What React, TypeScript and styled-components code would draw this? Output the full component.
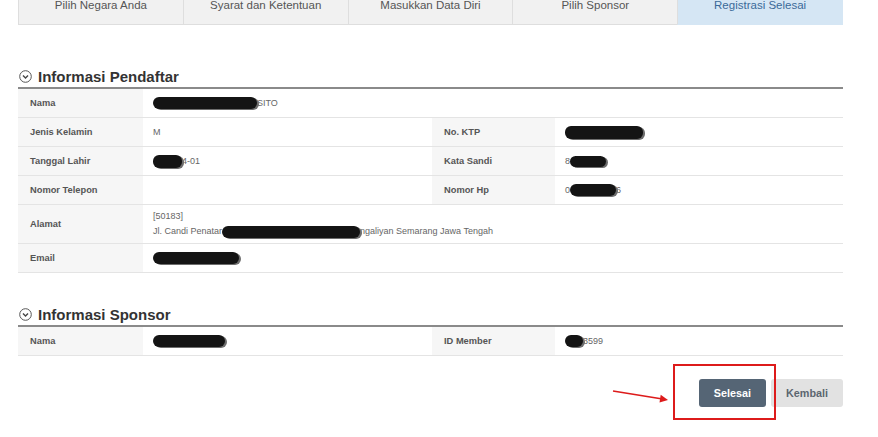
import styled, { createGlobalStyle } from "styled-components";

const GlobalStyle = createGlobalStyle`
  html, body {
    margin: 0;
    background: #fff;
  }
  body {
    font-family: "Liberation Sans", Arial, sans-serif;
  }
`;

const Page = styled.div`
  width: 825px;
  margin-left: 18px;
  padding-bottom: 30px;
`;

const Tabs = styled.ul`
  display: flex;
  margin: -15px 0 0;
  padding: 0;
  list-style: none;
`;

const Tab = styled.li<{ $active?: boolean }>`
  flex: 1;
  height: 40px;
  box-sizing: border-box;
  display: flex;
  align-items: center;
  justify-content: center;
  font-size: 11.5px;
  background: ${(p) => (p.$active ? "#d5e6f4" : "#f1f1f1")};
  color: ${(p) => (p.$active ? "#3b6a99" : "#555")};
  border: 1px solid ${(p) => (p.$active ? "#d5e6f4" : "#dedede")};
  border-left-color: #dedede;
  border-right-width: 0;
  &:last-child {
    border-right-width: 1px;
  }
`;

const Section = styled.section<{ $gap: number }>`
  margin-top: ${(p) => p.$gap}px;
`;

const Title = styled.h2`
  display: flex;
  align-items: center;
  gap: 6px;
  height: 20px;
  margin: 0 0 1px;
  padding-left: 1px;
  font-size: 15px;
  font-weight: bold;
  color: #333;
`;

const Table = styled.div`
  display: grid;
  grid-template-columns: 125px 289px 123px 288px;
  border-top: 2px solid #8a8a8a;
`;

const Cell = styled.div`
  box-sizing: border-box;
  min-height: 29px;
  display: flex;
  flex-direction: column;
  justify-content: center;
  align-items: flex-start;
  padding: 4px 12px;
  line-height: 15px;
  border-bottom: 1px solid #e4e4e4;
`;

const Label = styled(Cell)`
  background: #f6f6f6;
  font-size: 9.3px;
  font-weight: bold;
  color: #555;
`;

const Value = styled(Cell)<{ $span?: number }>`
  grid-column: span ${(p) => p.$span ?? 1};
  padding-left: 10px;
  font-size: 9px;
  color: #666;
`;

const Line = styled.div`
  display: flex;
  align-items: center;
`;

const Redact = styled.span<{ $w: number; $h?: number }>`
  display: inline-block;
  width: ${(p) => p.$w}px;
  height: ${(p) => p.$h ?? 11}px;
  background: #141414;
  border-radius: 6px;
  box-shadow: 2px 1px 0 #6d6d6d;
  filter: blur(0.4px);
`;

const Actions = styled.div`
  display: flex;
  justify-content: flex-end;
  gap: 5px;
  margin-top: 23px;
`;

const Button = styled.button<{ $primary?: boolean }>`
  height: 28px;
  padding: 0 15px;
  border: 0;
  border-radius: 3px;
  font-family: "Liberation Sans", Arial, sans-serif;
  font-size: 10.8px;
  font-weight: bold;
  background: ${(p) => (p.$primary ? "#556575" : "#e2e2e2")};
  color: ${(p) => (p.$primary ? "#fff" : "#5c6670")};
`;

const Highlight = styled.div`
  position: relative;
  display: flex;
  &::before {
    content: "";
    position: absolute;
    left: -26px;
    right: -10px;
    top: -15px;
    bottom: -13px;
    border: 2px solid #dd1b1b;
  }
`;

const Arrow = styled.svg`
  position: absolute;
  left: -88px;
  top: 8px;
`;

const ToggleIcon = () => (
  <svg width="13" height="13" viewBox="0 0 13 13">
    <circle cx="6.5" cy="6.5" r="5.8" fill="none" stroke="#555" strokeWidth="1" />
    <path d="M4 5.6 L6.5 8 L9 5.6" fill="none" stroke="#444" strokeWidth="1.4" />
  </svg>
);

const steps = ["Pilih Negara Anda", "Syarat dan Ketentuan", "Masukkan Data Diri", "Pilih Sponsor", "Registrasi Selesai"];

export default function App() {
  return (
    <>
      <GlobalStyle />
      <Page>
        <Tabs>
          {steps.map((s, i) => (
            <Tab key={s} $active={i === steps.length - 1}>{s}</Tab>
          ))}
        </Tabs>

        <Section $gap={41}>
          <Title><ToggleIcon />Informasi Pendaftar</Title>
          <Table>
            <Label>Nama</Label>
            <Value $span={3}><Line><Redact $w={104} $h={12} />SITO</Line></Value>

            <Label>Jenis Kelamin</Label>
            <Value>M</Value>
            <Label>No. KTP</Label>
            <Value><Line><Redact $w={78} $h={13} /></Line></Value>

            <Label>Tanggal Lahir</Label>
            <Value><Line><Redact $w={29} $h={13} />4-01</Line></Value>
            <Label>Kata Sandi</Label>
            <Value><Line>8<Redact $w={36} $h={11} /></Line></Value>

            <Label>Nomor Telepon</Label>
            <Value></Value>
            <Label>Nomor Hp</Label>
            <Value><Line>0<Redact $w={46} $h={12} />6</Line></Value>

            <Label>Alamat</Label>
            <Value $span={3}>
              <Line>[50183]</Line>
              <Line>Jl. Candi Penatar<Redact $w={138} $h={12} />ngaliyan Semarang Jawa Tengah</Line>
            </Value>

            <Label>Email</Label>
            <Value $span={3}><Line><Redact $w={86} $h={12} /></Line></Value>
          </Table>
        </Section>

        <Section $gap={31}>
          <Title><ToggleIcon />Informasi Sponsor</Title>
          <Table>
            <Label>Nama</Label>
            <Value><Line><Redact $w={72} $h={12} /></Line></Value>
            <Label>ID Member</Label>
            <Value><Line><Redact $w={18} $h={12} />3599</Line></Value>
          </Table>
        </Section>

        <Actions>
          <Highlight>
            <Arrow width="60" height="18" viewBox="0 0 60 18">
              <line x1="2" y1="4" x2="50" y2="11.8" stroke="#dd1b1b" strokeWidth="1.6" />
              <polygon points="57,13 48.5,15.6 49.7,7.8" fill="#dd1b1b" />
            </Arrow>
            <Button $primary>Selesai</Button>
          </Highlight>
          <Button>Kembali</Button>
        </Actions>
      </Page>
    </>
  );
}
